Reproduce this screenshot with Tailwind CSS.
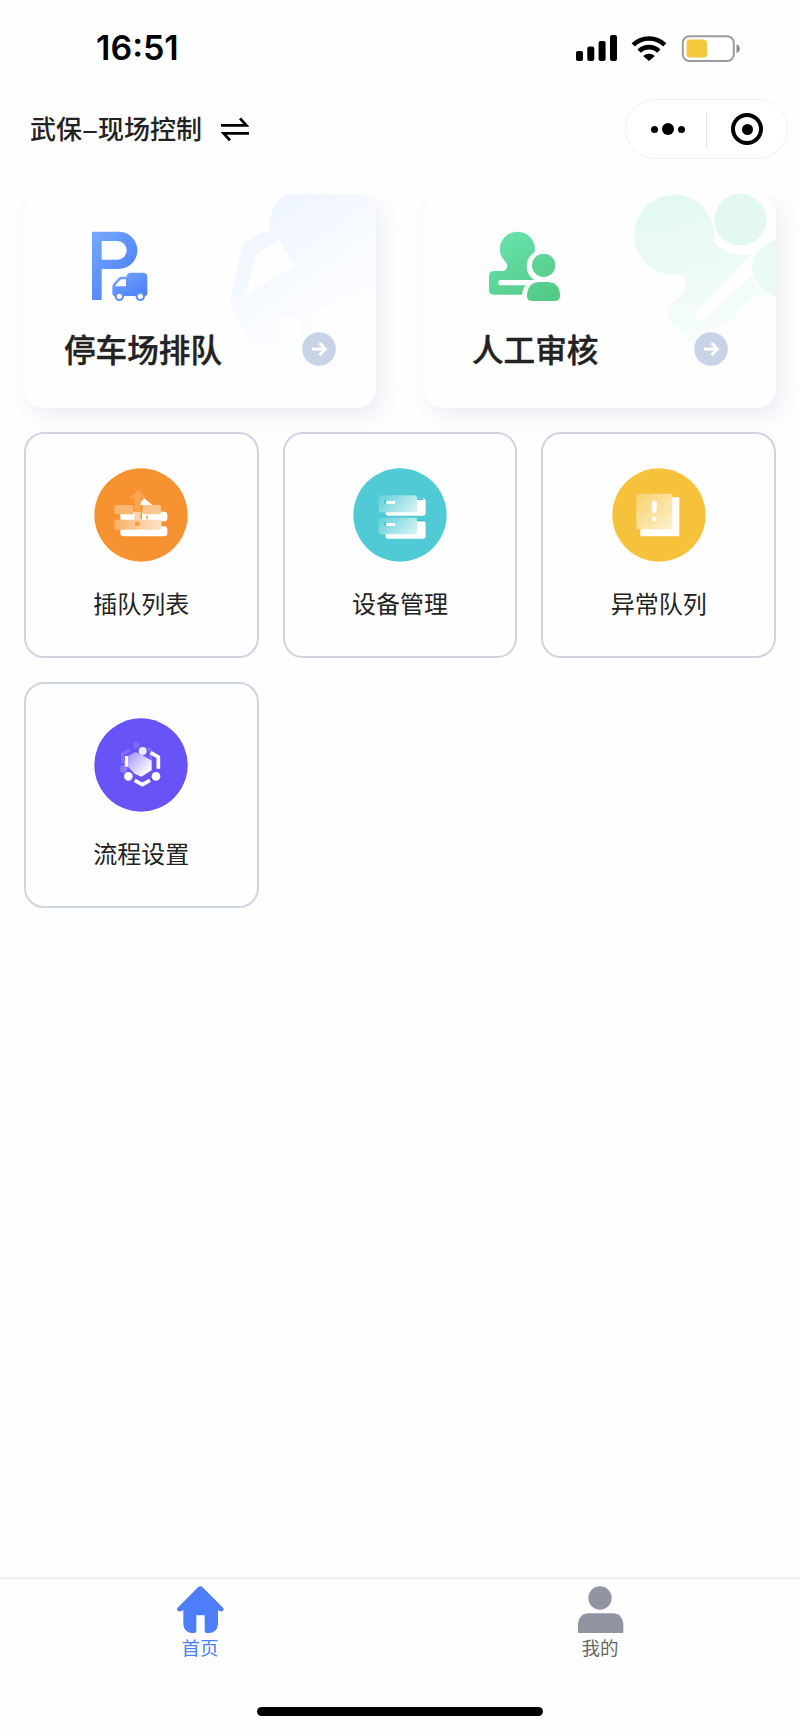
<!DOCTYPE html>
<html lang="zh-CN">
<head>
    <meta charset="UTF-8">
    <meta name="viewport" content="width=device-width, initial-scale=1.0">
    <title>武保–现场控制</title>
    <script src="https://cdn.jsdelivr.net/npm/@tailwindcss/browser@4"></script>
</head>
<body class="bg-[#fefefe] font-['Noto_Sans_CJK_SC',sans-serif] text-[#222]">
<div class="flex h-[1731px] w-[800px] flex-col overflow-hidden">

    <!-- Status bar -->
    <div class="flex h-24 shrink-0 items-center justify-between pl-[96px] pr-[59px]">
        <span class="font-['Inter',sans-serif] text-[34px] font-semibold leading-none text-black">16:51</span>
        <div class="flex items-center">
            <svg class="h-[26px] w-[42px]" viewBox="0 0 42 26" fill="#000">
                <rect x="0" y="16" width="7" height="10" rx="2"/>
                <rect x="11.3" y="11.5" width="7" height="14.5" rx="2"/>
                <rect x="22.6" y="6" width="7" height="20" rx="2"/>
                <rect x="34" y="0" width="7" height="26" rx="2"/>
            </svg>
            <svg class="ml-[13px] h-[26px] w-[36px]" viewBox="694 101 106 79" fill="none" stroke="#000" stroke-width="14">
                <path d="M699 131A69 69 0 0 1 795 131"/>
                <path d="M717 150A43 43 0 0 1 777 150"/>
                <path d="M729 165A26 26 0 0 1 765 165L747 180Z" fill="#000" stroke="none"/>
            </svg>
            <svg class="ml-[14px] h-[27px] w-[60px]" viewBox="0 0 60 27">
                <rect x="1.8" y="1.3" width="51" height="24.6" rx="6.5" fill="#fff" stroke="#9b9b9f" stroke-width="2"/>
                <rect x="5.5" y="4.5" width="20.5" height="18" rx="3.5" fill="#f4c83b"/>
                <path d="M55.5 9.5a4.3 4.3 0 0 1 0 8.4z" fill="#8e8e92"/>
            </svg>
        </div>
    </div>

    <!-- Navbar -->
    <header class="flex h-[98px] shrink-0 items-start justify-between pl-[30px] pr-[12px] pt-[3px]">
        <div class="flex h-[60px] items-center">
            <h1 class="flex w-[172px] items-center whitespace-nowrap pb-[2px] text-[26px] font-medium leading-none">武保<span class="inline-block origin-left scale-x-115 pr-[2px]">–</span>现场控制</h1>
            <svg class="ml-[19px] h-[25px] w-[28px]" viewBox="664 350 84 75" fill="none" stroke="#000" stroke-width="8.5">
                <path d="M664 375H740L721 354"/>
                <path d="M748 399H672L691 420"/>
            </svg>
        </div>
        <div class="flex h-[60px] w-[163px] items-center rounded-full border border-[#f1f1f1] bg-white">
            <div class="flex w-[80px] items-center justify-center gap-[4px] pl-[3px]">
                <span class="size-[7px] rounded-full bg-black"></span>
                <span class="size-[12px] rounded-full bg-black"></span>
                <span class="size-[7px] rounded-full bg-black"></span>
            </div>
            <span class="h-[35px] w-px bg-[#dfdfdf]"></span>
            <div class="flex grow items-center justify-center">
                <span class="flex size-[32px] items-center justify-center rounded-full border-4 border-black">
                    <span class="size-[11px] rounded-full bg-black"></span>
                </span>
            </div>
        </div>
    </header>

    <main class="grow overflow-hidden px-6">
        <!-- Main entries -->
        <div class="flex justify-between">
            <a href="#" class="relative block h-[214px] w-[352px] rounded-[20px] bg-[#fefefe] shadow-[6px_8px_20px_rgba(90,100,170,0.1)]">
                <svg class="absolute inset-0 h-full w-full rounded-[20px]" viewBox="72 72 1056 642">
                    <defs>
                        <linearGradient id="truckBg" gradientUnits="userSpaceOnUse" x1="780" y1="120" x2="1020" y2="460">
                            <stop offset="0" stop-color="#eef5ff"/>
                            <stop offset="0.45" stop-color="#f6f9ff"/>
                            <stop offset="1" stop-color="#fcfdff"/>
                        </linearGradient>
                    </defs>
                    <path fill="url(#truckBg)" fill-rule="evenodd" d="M862 72H1128V364Q1050 366 1000 400Q960 424 932 428L934 520Q900 545 850 540Q790 522 770 524Q740 505 706 430Q688 400 692 375L726 236Q734 214 756 202L812 178Q802 100 862 72ZM838 210L776 246Q766 256 762 276L738 380L778 350L884 290ZM835 440V500Q850 515 872 515Q890 515 902 500V450Q870 430 835 440Z"/>
                </svg>
                <svg class="absolute left-[68px] top-[37px] h-[70px] w-[56px]" viewBox="276 183 168 210">
                    <defs>
                        <linearGradient id="blueP" x1="0" y1="0" x2="0.8" y2="1">
                            <stop offset="0" stop-color="#78a9fb"/>
                            <stop offset="1" stop-color="#477cf8"/>
                        </linearGradient>
                    </defs>
                    <path fill="url(#blueP)" fill-rule="evenodd" d="M276 185H356A56 56 0 0 1 356 297H305V390H276ZM305 213V269H352A28 28 0 0 0 352 213Z"/>
                    <path fill="url(#blueP)" fill-rule="evenodd" d="M380 320Q380 308 392 308H430Q442 308 442 322V372Q442 378 434 378A14 14 0 0 1 407 378H371A14 14 0 0 1 344 378Q337 378 337 370V350Q338 344 343 338L356 324Q360 320 366 320ZM378 328H366Q362 328 358 332L344 349H378Z"/>
                    <circle cx="358" cy="379" r="11" fill="#fff" stroke="#5b8cfa" stroke-width="6"/>
                    <circle cx="421" cy="379" r="11" fill="#fff" stroke="#5b8cfa" stroke-width="6"/>
                </svg>
                <div class="relative flex items-center pl-[40px] pt-[138px]">
                    <h2 class="w-[238px] pb-[2px] text-[31.6px] font-medium leading-[32px] [-webkit-text-stroke:0.4px_#222]">停车场排队</h2>
                    <svg class="size-[34px]" viewBox="0 0 34 34" fill="none">
                        <circle cx="17" cy="17" r="16.8" fill="#c9d3e6"/>
                        <path d="M10 17H23M17.5 11L23.3 17L17.5 23" stroke="#fff" stroke-width="3"/>
                    </svg>
                </div>
            </a>
            <a href="#" class="relative block h-[214px] w-[352px] rounded-[20px] bg-[#fefefe] shadow-[6px_8px_20px_rgba(90,100,170,0.1)]">
                <svg class="absolute inset-0 h-full w-full rounded-[20px]" viewBox="72 72 1056 642">
                    <defs>
                        <linearGradient id="peopleBg" gradientUnits="userSpaceOnUse" x1="820" y1="72" x2="940" y2="530">
                            <stop offset="0" stop-color="#e3f9f0"/>
                            <stop offset="0.6" stop-color="#effbf6"/>
                            <stop offset="1" stop-color="#f9fefc"/>
                        </linearGradient>
                    </defs>
                    <circle cx="822" cy="195" r="120" fill="url(#peopleBg)"/>
                    <path fill="url(#peopleBg)" d="M822 75Q875 75 912 110Q908 190 960 234Q1000 262 1056 252L894 420Q882 436 890 446Q902 454 916 442L1056 318Q1064 350 1090 368Q1010 410 1000 450L900 500L880 524L808 450Q796 430 812 402L850 370Q864 345 850 318L800 300Z"/>
                    <circle cx="1021" cy="149" r="78" fill="#e3f9f0"/>
                    <path fill="#eafaf4" d="M1128 210V380Q1060 360 1056 290Q1060 230 1128 210Z"/>
                </svg>
                <svg class="absolute left-[65px] top-[37px] h-[70px] w-[71px]" viewBox="267 183 213 210">
                    <defs>
                        <linearGradient id="green" gradientUnits="userSpaceOnUse" x1="300" y1="185" x2="420" y2="393">
                            <stop offset="0" stop-color="#69e3ad"/>
                            <stop offset="1" stop-color="#54ca87"/>
                        </linearGradient>
                    </defs>
                    <path fill="url(#green)" d="M353 185A52 52 0 0 1 404 246Q380 262 380 290Q381 315 402 330H303A8 8 0 0 0 303 346H378Q368 356 366 374H281Q267 374 267 360V319Q267 303 283 303H305Q321 303 322 287Q322 281 315 274A52 52 0 0 1 353 185Z"/>
                    <circle cx="431" cy="286" r="35" fill="url(#green)"/>
                    <path fill="url(#green)" d="M415 336H446Q479 340 480 374V380Q478 393 464 393H397Q382 393 381 380V374Q383 340 415 336Z"/>
                </svg>
                <div class="relative flex items-center pl-[48px] pt-[138px]">
                    <h2 class="w-[222px] pb-[2px] text-[31.6px] font-medium leading-[32px] [-webkit-text-stroke:0.4px_#222]">人工审核</h2>
                    <svg class="size-[34px]" viewBox="0 0 34 34" fill="none">
                        <circle cx="17" cy="17" r="16.8" fill="#c9d3e6"/>
                        <path d="M10 17H23M17.5 11L23.3 17L17.5 23" stroke="#fff" stroke-width="3"/>
                    </svg>
                </div>
            </a>
        </div>

        <!-- Function tiles -->
        <div class="relative mt-6 grid grid-cols-3 gap-6">
            <a href="#" class="flex h-[226px] flex-col items-center rounded-[20px] border-2 border-[#cfd5e0] bg-[#fefefe] pt-[34px]">
                <svg class="size-[94px]" viewBox="254 130 282 282">
                    <defs>
                        <linearGradient id="orangeBar" x1="0" x2="1">
                            <stop offset="0" stop-color="#fab165"/>
                            <stop offset="1" stop-color="#fde3c8"/>
                        </linearGradient>
                    </defs>
                    <circle cx="395" cy="271" r="140" fill="#f79230"/>
                    <path d="M404 221L430 242H386Z" fill="#fff"/>
                    <rect x="333" y="261" width="141" height="29" rx="9" fill="#fff"/>
                    <rect x="333" y="305" width="141" height="30" rx="9" fill="#fff"/>
                    <rect x="315" y="241" width="57" height="28" rx="5" fill="#fab772"/>
                    <rect x="400" y="241" width="55" height="28" rx="5" fill="#fbc58e"/>
                    <rect x="315" y="285" width="141" height="30" rx="5" fill="url(#orangeBar)"/>
                    <path d="M386 196L412 220H394V286H376V220H360Z" fill="#f9a552"/>
                    <path d="M376 262H394V286H376Z" fill="#fcd5ae"/>
                    <path d="M396 250V284M413 272V284" stroke="#f79230" stroke-width="4"/>
                    <rect x="377" y="291" width="13" height="12" rx="2" fill="#f79a40"/>
                </svg>
                <span class="mt-[23px] text-[24px] leading-9">插队列表</span>
            </a>
            <a href="#" class="flex h-[226px] flex-col items-center rounded-[20px] border-2 border-[#cfd5e0] bg-[#fefefe] pt-[34px]">
                <svg class="size-[94px]" viewBox="249 130 282 282">
                    <defs>
                        <linearGradient id="teal" x1="0" y1="0.3" x2="1" y2="0.7">
                            <stop offset="0" stop-color="#6dd3db"/>
                            <stop offset="1" stop-color="#d0f1f3"/>
                        </linearGradient>
                    </defs>
                    <circle cx="390" cy="271" r="140" fill="#50cad5"/>
                    <rect x="347" y="222" width="120" height="51" rx="7" fill="#fff"/>
                    <rect x="347" y="290" width="120" height="52" rx="7" fill="#fff"/>
                    <path d="M441 222H462L458 226H441ZM441 290H462L458 287H441Z" fill="#3fb9c4"/>
                    <rect x="326" y="212" width="115" height="51" rx="7" fill="url(#teal)"/>
                    <rect x="326" y="279" width="115" height="50" rx="7" fill="url(#teal)"/>
                    <path d="M343 226H350V238H343ZM343 292H350V304H343Z" fill="#45bfca"/>
                    <rect x="348" y="229" width="27" height="9" fill="#fff"/>
                    <rect x="348" y="295" width="27" height="9" fill="#fff"/>
                </svg>
                <span class="mt-[23px] text-[24px] leading-9">设备管理</span>
            </a>
            <a href="#" class="flex h-[226px] flex-col items-center rounded-[20px] border-2 border-[#cfd5e0] bg-[#fefefe] pt-[34px]">
                <svg class="size-[94px]" viewBox="245 130 282 282">
                    <defs>
                        <linearGradient id="yellow" x1="0" y1="0" x2="1" y2="1">
                            <stop offset="0" stop-color="#f8d26d"/>
                            <stop offset="1" stop-color="#fdf0cd"/>
                        </linearGradient>
                    </defs>
                    <circle cx="386" cy="271" r="140" fill="#f6c23b"/>
                    <rect x="330" y="218" width="117" height="117" rx="4" fill="#fff"/>
                    <rect x="318" y="207" width="108" height="107" rx="4" fill="url(#yellow)"/>
                    <path d="M364 232Q372 225 380 232L378 262Q372 270 366 262Z" fill="#fff"/>
                    <circle cx="372" cy="283" r="7" fill="#fff"/>
                </svg>
                <span class="mt-[23px] text-[24px] leading-9">异常队列</span>
            </a>
            <a href="#" class="flex h-[226px] flex-col items-center rounded-[20px] border-2 border-[#cfd5e0] bg-[#fefefe] pt-[34px]">
                <svg class="size-[94px]" viewBox="254 130 282 282">
                    <defs>
                        <linearGradient id="purple" x1="0" y1="0" x2="1" y2="1">
                            <stop offset="0.1" stop-color="#a79bfb"/>
                            <stop offset="0.75" stop-color="#f6f4ff"/>
                        </linearGradient>
                    </defs>
                    <circle cx="395" cy="271" r="140" fill="#6853f6"/>
                    <g fill="none" stroke="#8170f8" stroke-width="9">
                        <path d="M360 226L340 238V266M414 220L424 228V262"/>
                    </g>
                    <circle cx="381" cy="212" r="10" fill="#7c6af8"/>
                    <circle cx="343" cy="283" r="11" fill="#8c7df9"/>
                    <path d="M352 244V276M424 234L447 247V282M376 317L399 330L422 317" fill="none" stroke="#fff" stroke-width="11"/>
                    <circle cx="400" cy="229" r="12" fill="#eeebff"/>
                    <circle cx="357" cy="305" r="13" fill="#fff"/>
                    <circle cx="440" cy="305" r="13" fill="#fff"/>
                    <path d="M378 232L398 240L427 258V287L396 306L376 297L356 276V244Z" fill="url(#purple)"/>
                </svg>
                <span class="mt-[23px] text-[24px] leading-9">流程设置</span>
            </a>
        </div>
    </main>

    <!-- Tab bar -->
    <footer class="flex h-[154px] shrink-0 flex-col items-center border-t-2 border-[#f1f1f1]">
        <nav class="grid w-full grid-cols-2 pt-[7px]">
            <a href="#" class="flex flex-col items-center text-[#4d7df8]">
                <svg class="h-[47px] w-[47px]" viewBox="229 78 141 141" fill="#4d7df9">
                    <path d="M292 82Q299 76 306 82L367 143Q371 148 367 153Q360 157 352 150V193Q350 217 326 219H319Q312 219 312 212V166H287V212Q287 219 280 219H273Q250 217 248 193V150Q239 157 232 153Q227 148 231 143Z"/>
                </svg>
                <span class="mt-px text-[18.5px] leading-[26px]">首页</span>
            </a>
            <a href="#" class="flex flex-col items-center text-[#666]">
                <svg class="h-[47px] w-[47px]" viewBox="230 78 141 141" fill="#9194a1">
                    <circle cx="299" cy="114" r="35"/>
                    <path d="M263 160H340Q366 163 369 190V216Q369 219 366 219H236Q233 219 233 216V190Q236 163 263 160Z"/>
                </svg>
                <span class="mt-px text-[18.5px] leading-[26px]">我的</span>
            </a>
        </nav>
        <div class="mt-[47px] h-[9px] w-[286px] rounded-full bg-black"></div>
    </footer>
</div>
</body>
</html>
